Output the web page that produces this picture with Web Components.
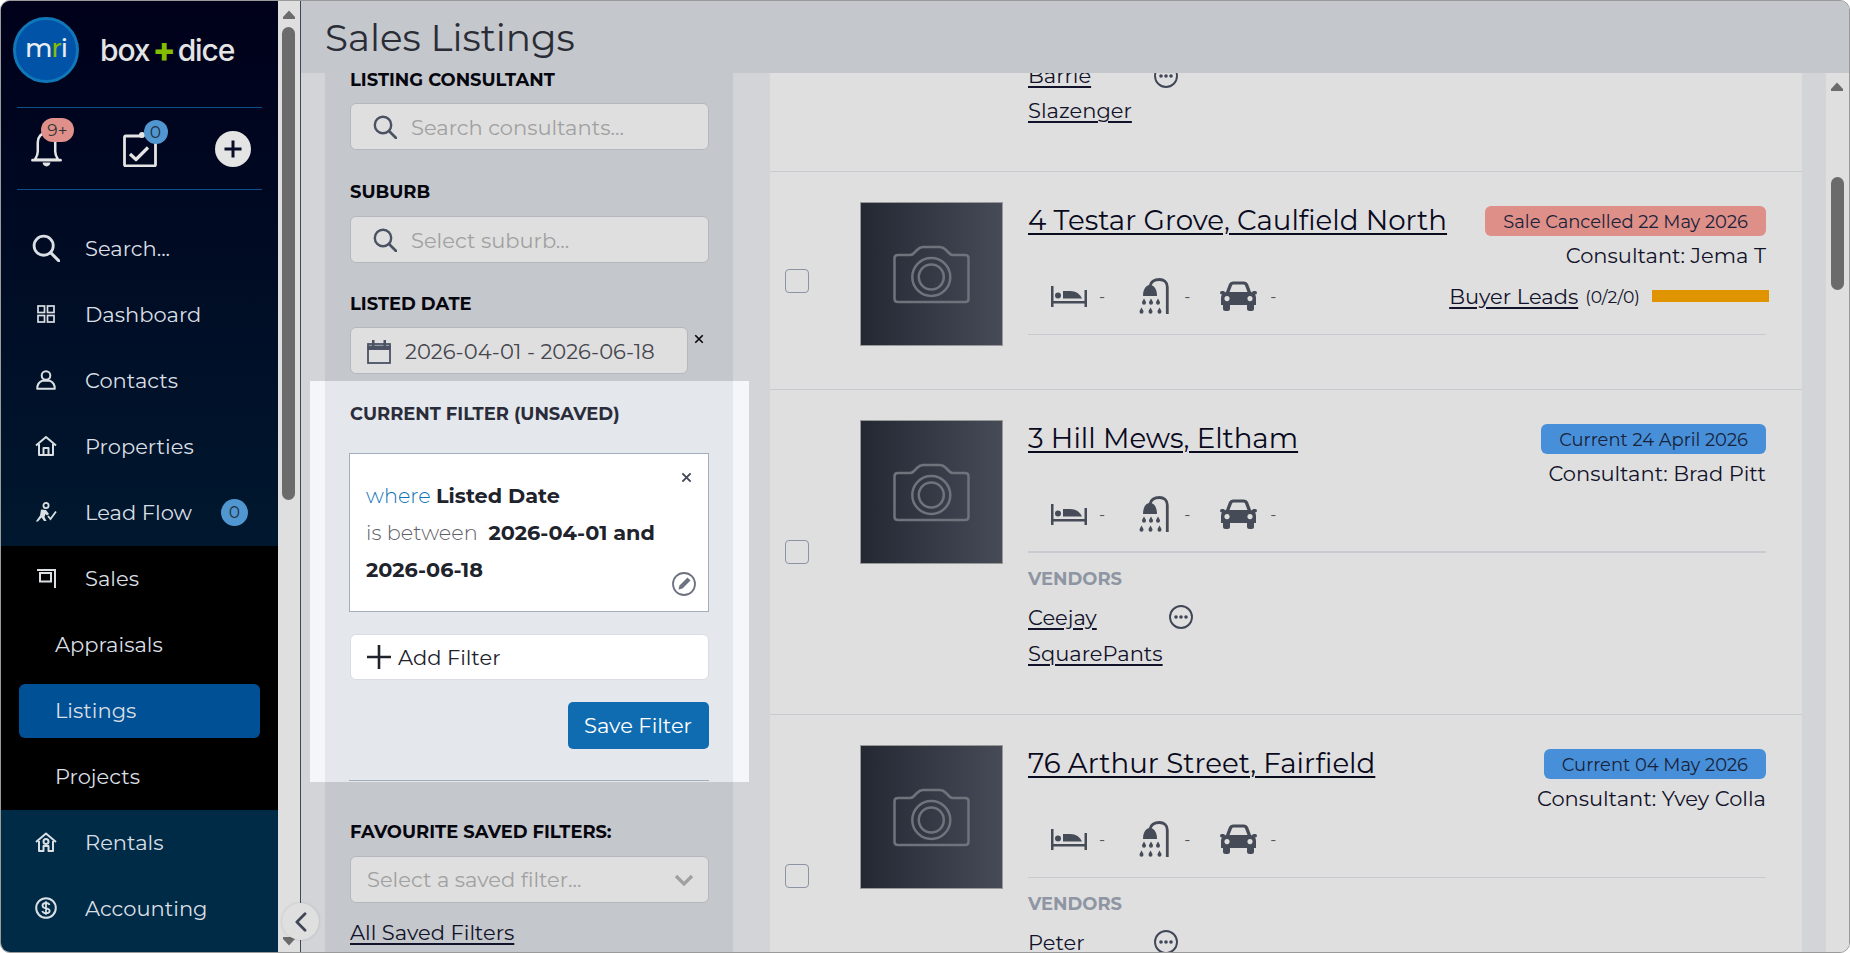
<!DOCTYPE html>
<html lang="en"><head><meta charset="utf-8"><title>Sales Listings</title>
<style>
html,body{margin:0;padding:0;background:#fff}
body{font-family:Montserrat,Inter,"Liberation Sans",sans-serif;width:1850px;height:953px;overflow:hidden;color:#12122a}
</style></head><body>
<app-shell>
  <side-nav slot="nav"></side-nav>
  <page-head slot="head">Sales Listings</page-head>
  <filter-panel slot="filters"></filter-panel>
  <listing-list slot="list">
    <listing-row cut vendors="Barrie|Slazenger" dots="126"></listing-row>
    <listing-row title="4 Testar Grove, Caulfield North" status="Sale Cancelled 22 May 2026" tone="red" consultant="Jema T" leads="(0/2/0)"></listing-row>
    <listing-row thick title="3 Hill Mews, Eltham" status="Current 24 April 2026" tone="blue" consultant="Brad Pitt" vendors="Ceejay|SquarePants" dots="141"></listing-row>
    <listing-row style="min-height:322px" title="76 Arthur Street, Fairfield" status="Current 04 May 2026" tone="blue" consultant="Yvey Colla" vendors="Peter" dots="126"></listing-row>
  </listing-list>
</app-shell>
<script>
const ICONS={
search:['0 0 24 24','<circle cx="10" cy="10" r="8.2" fill="none" stroke="currentColor" stroke-width="2.4"/><path d="M16 16l7 7" stroke="currentColor" stroke-width="2.6" stroke-linecap="round"/>'],
dash:['0 0 18 18','<g fill="none" stroke="currentColor" stroke-width="1.7"><rect x="1" y="1" width="6.5" height="6.5"/><rect x="10.5" y="1" width="6.5" height="6.5"/><rect x="1" y="10.5" width="6.5" height="6.5"/><rect x="10.5" y="10.5" width="6.5" height="6.5"/></g>'],
contact:['0 0 20 20','<g fill="none" stroke="currentColor" stroke-width="2"><circle cx="10" cy="5.5" r="4.3"/><path d="M1.2 18.8c0-4.5 2.5-7 5-8h7.6c2.5 1 5 3.5 5 8z" stroke-linejoin="round"/></g>'],
house:['0 0 22 20','<g fill="none" stroke="currentColor" stroke-width="2" stroke-linejoin="round"><path d="M1 9.5L11 1l10 8.5"/><path d="M4 8v11h14V8"/><path d="M8.5 19v-7h5v7"/></g>'],
lead:['0 0 22 20','<circle cx="11" cy="3.5" r="2.6" fill="none" stroke="currentColor" stroke-width="1.8"/><path d="M6 7.500l5 .5 3 4-2 1.500-1.500-1.500-1 3 2 4H9l-2.500-3.500L3 19.500H.8L5 13.500z" fill="currentColor"/><path d="M13 14l2.500 3L21 9.500" fill="none" stroke="currentColor" stroke-width="1.8"/>'],
sales:['0 0 19 20','<g fill="none" stroke="currentColor" stroke-width="2"><path d="M0 2h18v18"/><rect x="3" y="5" width="11" height="8.5"/></g>'],
rent:['0 0 22 20','<g fill="none" stroke="currentColor" stroke-width="2" stroke-linejoin="round"><path d="M1 10L11 1.500 21 10"/><path d="M4 9v10h4.500v-5h5v5H18V9"/><circle cx="11" cy="9.5" r="2.5"/></g>'],
money:['0 0 22 22','<circle cx="11" cy="11" r="9.8" fill="none" stroke="currentColor" stroke-width="2"/><path d="M14.500 8c-.5-1.500-2-2-3.500-2-2 0-3.500 1-3.500 2.700 0 3.800 7.200 1.500 7.200 5 0 1.600-1.700 2.500-3.700 2.500-1.700 0-3.200-.7-3.700-2.200M11 4.200v13.600" fill="none" stroke="currentColor" stroke-width="1.8"/>'],
bell:['0 0 32 38','<g fill="none" stroke="currentColor" stroke-width="2.6" stroke-linejoin="round"><path d="M16 3c-5.500 0-9 4-9 9.500V22c0 4-1.500 6-3 8.500h24c-1.500-2.500-3-4.500-3-8.500v-9.500C25 7 21.500 3 16 3z"/><path d="M1.500 31h29" stroke-linecap="round"/></g><path d="M12 33.500h8c0 2.500-2 4-4 4s-4-1.500-4-4z" fill="currentColor"/>'],
clip:['0 0 34 36','<g fill="none" stroke="currentColor" stroke-width="2.8" stroke-linejoin="round"><path d="M20 5H3a1.500 1.500 0 0 0-1.500 1.500v27A1.500 1.500 0 0 0 3 35h28a1.500 1.500 0 0 0 1.500-1.500v-22"/><path d="M7 23l6 5.500 12-12" stroke-width="3.2"/></g><circle cx="19" cy="4" r="3" fill="currentColor"/>'],
plusc:['0 0 36 36','<circle cx="18" cy="18" r="18" fill="currentColor"/><path d="M18 9.500v17M9.500 18h17" stroke="#0a0c26" stroke-width="3"/>'],
cal:['0 0 24 25','<g fill="none" stroke="currentColor"><rect x="1" y="5" width="22" height="19" stroke-width="1.8"/><path d="M1 7h22v3.500H1z" fill="currentColor" stroke-width="1"/></g><path d="M5 1h2.500v6H5zM16.500 1H19v6h-2.500z" fill="currentColor"/>'],
cross:['0 0 12 12','<path d="M1.500 1.500l9 9m0-9l-9 9" stroke="currentColor" stroke-width="2"/>'],
edit:['0 0 24 24','<circle cx="12" cy="12" r="11" fill="none" stroke="currentColor" stroke-width="1.8"/><path d="M6.500 17.500l1-4 8-8 3 3-8 8z" fill="currentColor"/>'],
plus:['0 0 24 24','<path d="M12 0v24M0 12h24" stroke="currentColor" stroke-width="2.6"/>'],
chev:['0 0 20 12','<path d="M2 2l8 8 8-8" fill="none" stroke="currentColor" stroke-width="3.2"/>'],
back:['0 0 14 22','<path d="M12 2L3 11l9 9" fill="none" stroke="currentColor" stroke-width="3" stroke-linecap="round" stroke-linejoin="round"/>'],
bed:['0 0 38 23','<g fill="currentColor"><rect x="1" y="1" width="2.5" height="21"/><rect x="34.500" y="5" width="2.5" height="17"/><rect x="1" y="16" width="36" height="2.5"/><circle cx="8" cy="10.5" r="3"/><path d="M13 6h7c6 0 10 3 12 7.500H13z"/></g>'],
shower:['0 0 30 36','<path d="M28.300 36V9C28.300 4 24.500 1.500 20.500 1.500 16 1.500 12 3.500 11 8" fill="none" stroke="currentColor" stroke-width="2.8"/><path d="M4 18C4 11 7 7 11 7s7 4 7 11z" fill="currentColor"/><g fill="currentColor"><path d="M5 20.500c1 2 2 3 2 4.200a2 2 0 0 1-4 0c0-1.200 1-2.200 2-4.200z"/><path d="M12 20.500c1 2 2 3 2 4.200a2 2 0 0 1-4 0c0-1.200 1-2.200 2-4.200z"/><path d="M19 20.500c1 2 2 3 2 4.200a2 2 0 0 1-4 0c0-1.200 1-2.200 2-4.200z"/><path d="M2.500 29.500c1 2 2 3 2 4.200a2 2 0 0 1-4 0c0-1.200 1-2.200 2-4.200z"/><path d="M11.500 29.500c1 2 2 3 2 4.200a2 2 0 0 1-4 0c0-1.200 1-2.200 2-4.200z"/><path d="M20.500 29.500c1 2 2 3 2 4.200a2 2 0 0 1-4 0c0-1.200 1-2.200 2-4.200z"/></g>'],
car:['0 0 37 30','<g fill="currentColor"><path fill-rule="evenodd" d="M6 11L9 3Q10 .5 13 .5H24Q27 .5 28 3L31 11Q36 12 36 17V24H1V17Q1 12 6 11ZM9.500 11H27.500L25 4.500Q24.500 3.500 23.500 3.500H13.500Q12.500 3.500 12 4.500ZM7 15a2.600 2.600 0 1 0 .01 0ZM30 15a2.600 2.600 0 1 0 .01 0Z"/><rect x="3" y="22" width="7" height="8" rx="2.5"/><rect x="27" y="22" width="7" height="8" rx="2.5"/><rect y="10" width="5" height="3.5" rx="1.7"/><rect x="32" y="10" width="5" height="3.5" rx="1.7"/></g>'],
camera:['0 0 78 59','<g fill="none" stroke="currentColor" stroke-width="2.5"><path d="M5 10H17Q19 10 20.500 8.500L24 5Q27 2 30 2H47Q50 2 53 5L56.500 8.500Q58 10 60 10H72Q75.500 10 75.500 13V54Q75.500 57 72 57H5Q1.500 57 1.500 54V13Q1.500 10 5 10Z"/><circle cx="38.3" cy="32" r="19"/><circle cx="38.3" cy="32" r="12.5"/></g>'],
dots:['0 0 24 24','<circle cx="12" cy="12" r="11" fill="none" stroke="currentColor" stroke-width="1.9"/><g fill="currentColor"><circle cx="7" cy="12" r="1.8"/><circle cx="12" cy="12" r="1.8"/><circle cx="17" cy="12" r="1.8"/></g>'],
up:['0 0 12 9','<path d="M6 .5L12 7v2H0V7z" fill="currentColor"/>'],
down:['0 0 12 9','<path d="M6 8.500L12 2V0H0v2z" fill="currentColor"/>']
};
function def(name,html){
  customElements.define(name,class extends HTMLElement{
    constructor(){super();this.attachShadow({mode:'open'});}
    connectedCallback(){
      const a=n=>this.getAttribute(n)||'';
      this.shadowRoot.innerHTML=typeof html==='function'?html(a,this):html;
    }
  });
}
def('x-icon',(a)=>{const i=ICONS[a('name')];const w=a('w')||24,h=a('h')||w;
  return `<style>:host{display:inline-flex;flex:none;line-height:0}svg{display:block}</style><svg width="${w}" height="${h}" viewBox="${i[0]}" aria-hidden="true">${i[1]}</svg>`});

def('app-shell',`<style>
:host{display:flex;position:relative;box-sizing:border-box;width:1850px;height:953px;border:1px solid #9a9a9a;border-radius:10px;overflow:hidden;background:#d3d4d8}
.nav{flex:none;width:277px;display:flex}
.gut{flex:none;width:22px;box-sizing:border-box;background:#dfdfdf;display:flex;flex-direction:column;align-items:center}
.up{margin-top:9px;color:#6b6b6b;margin-left:-1px}
.th{width:13px;height:473px;margin-top:8px;background:#6b6b6b;border-radius:7px;margin-left:-1px}
.dn{margin-top:auto;margin-bottom:6px;color:#6b6b6b;margin-left:-1px}
.rule{flex:none;width:1px;background:#3f4656}
.main{flex:1;min-width:0;display:flex;flex-direction:column}
.body{flex:1;min-height:0;display:flex;background:#d3d4d8;overflow:hidden}
.fl{flex:none;width:408px;margin-left:24px}
.ls{flex:none;width:1032px;margin-left:37px}
.sb{flex:none;width:23px;margin-left:24px;background:#dfdfdf;display:flex;flex-direction:column;align-items:center}
.sb .up{margin-top:9px}
.sb .th{height:113px;margin-top:86px;margin-left:0}
.col{position:absolute;left:281px;top:902px;width:37px;height:37px;border-radius:50%;background:#dfdfdf;display:flex;align-items:center;justify-content:center;box-shadow:0 0 3px rgba(0,0,0,.15);color:#3f4656}
</style>
<div class="nav"><slot name="nav"></slot></div>
<div class="gut"><x-icon class="up" name="up" w="12" h="9"></x-icon><div class="th"></div><x-icon class="dn" name="down" w="12" h="9"></x-icon></div>
<div class="rule"></div>
<div class="main"><slot name="head"></slot><div class="body">
<div class="fl"><slot name="filters"></slot></div>
<div class="ls"><slot name="list"></slot></div>
<div class="sb"><x-icon class="up" name="up" w="12" h="9"></x-icon><div class="th"></div></div>
</div></div>
<div class="col"><x-icon name="back" w="13" h="20"></x-icon></div>`);

def('page-head',`<style>:host{display:flex;align-items:center;flex:none;height:72px;box-sizing:border-box;padding:0 0 0 24px;background:#c4c7cb;font-size:37.3px;color:#2a2c36}</style><slot></slot>`);

def('nav-row',(a)=>`<style>
:host{display:flex;align-items:center;height:66px;box-sizing:border-box;font-size:21px;color:#dadfe4}
.i{width:44px;margin-left:23px;margin-right:17px;display:flex;justify-content:center;flex:none}
:host([sub]){padding-left:54px}
:host([active]){height:54px;margin:6px 18px;padding-left:36px;background:#005095;border-radius:6px}
.b{margin-left:auto;margin-right:30px;width:27px;height:27px;border-radius:50%;background:#5096d0;color:#22303f;font-size:17px;display:flex;align-items:center;justify-content:center}
</style>${a('icon')?`<div class="i"><x-icon name="${a('icon')}" w="${a('w')||22}" h="${a('h')||20}"></x-icon></div>`:''}<slot></slot>${a('badge')?`<span class="b">${a('badge')}</span>`:''}`);

def('side-nav',`<style>
:host{display:flex;flex-direction:column;width:277px;height:100%;background:#002b47;color:#e4e4e4}
.top{background:linear-gradient(#00001a,#00182f);height:545px;flex:none}
.logo{height:106px;box-sizing:border-box;padding:16px 0 0 12px;display:flex;align-items:flex-start;gap:21px}
.mri{width:66px;height:66px;box-sizing:border-box;border-radius:50%;background:#0053a6;border:3px solid #1077b8;display:flex;align-items:center;justify-content:center;color:#e8edf2;font-size:26px;font-weight:500;letter-spacing:-1px;padding-bottom:4px}
.mri b{font-weight:500;color:#84bd00}
.wm{display:flex;align-items:center;height:66px;font-family:Inter,sans-serif;font-size:30px;font-weight:500;color:#e4e4e4;letter-spacing:-1.1px}
.wm i{font-style:normal;font-weight:800;color:#84bd00;font-size:34px;margin:0 3px;line-height:1}
.hr{height:1px;margin:0 16px;background:#0b4f8e}
.act{height:81px;display:grid;grid-template-columns:repeat(3,93px);align-items:center;justify-items:center;margin-left:-1px}
.wrap{position:relative;display:flex}
.bd{position:absolute;display:flex;align-items:center;justify-content:center;color:#333;font-size:17px;height:24px;background:#e0908a;border-radius:12px;width:33px;left:10px;top:-12px}
.bd.n{background:#5096d0;width:24px;left:21px;top:-11px;color:#22303f}
.rows{padding-top:25px}
.sales{background:#000;height:264px;flex:none}
.low{padding-bottom:2px}
</style>
<div class="top">
 <div class="logo"><div class="mri"><span>m<b>r</b>i</span></div><div class="wm">box<i>+</i>dice</div></div>
 <div class="hr"></div>
 <div class="act">
  <div class="wrap"><x-icon name="bell" w="31" h="37"></x-icon><span class="bd">9+</span></div>
  <div class="wrap"><x-icon name="clip" w="34" h="36"></x-icon><span class="bd n">0</span></div>
  <div class="wrap"><x-icon name="plusc" w="36" h="36"></x-icon></div>
 </div>
 <div class="hr"></div>
 <div class="rows">
  <nav-row icon="search" w="28" h="28">Search...</nav-row>
  <nav-row icon="dash" w="18" h="18">Dashboard</nav-row>
  <nav-row icon="contact" w="20" h="20">Contacts</nav-row>
  <nav-row icon="house" w="22" h="20">Properties</nav-row>
  <nav-row icon="lead" w="22" h="20" badge="0">Lead Flow</nav-row>
 </div>
</div>
<div class="sales">
 <nav-row class="low" icon="sales" w="19" h="20">Sales</nav-row>
 <nav-row class="low" sub>Appraisals</nav-row>
 <nav-row class="low" sub active>Listings</nav-row>
 <nav-row class="low" sub>Projects</nav-row>
</div>
<nav-row class="low" icon="rent" w="22" h="20">Rentals</nav-row>
<nav-row class="low" icon="money" w="22" h="22">Accounting</nav-row>`);

def('field-label',`<style>:host{display:flex;align-items:center;height:20px;font-size:17.9px;font-weight:700;color:#06060f;white-space:nowrap}</style><slot></slot>`);
def('field-box',(a)=>`<style>
:host{display:flex;align-items:center;box-sizing:border-box;height:47px;padding-top:1px;background:#dfdfdf;border:1px solid #b4b7bc;border-radius:6px;font-size:21px;color:#a1a1a1;white-space:nowrap}
.s{margin:0 14px 0 22px;color:#4a5264}
.c{margin:0 14px 0 16px;color:#4a5264}
:host([val]){color:#45464e}
.e{margin-left:auto;margin-right:14px;color:#a0a0a0}
:host([pad]){padding:0 0 0 16px}
</style>${a('icon')==='search'?'<x-icon class="s" name="search" w="24" h="24"></x-icon>':''}${a('icon')==='cal'?'<x-icon class="c" name="cal" w="24" h="25"></x-icon>':''}<slot></slot>${a('icon')==='chev'?'<x-icon class="e" name="chev" w="20" h="12"></x-icon>':''}`);

def('current-filter',`<style>
:host{display:block;margin:0 -40.5px 0 -40px;padding:0 16px 0 15px;background:#f4f6fa}
.in{background:#e4e7ec;padding:22px 24.5px 1px 25px}
h3{margin:0;height:20px;display:flex;align-items:center;font-size:17.9px;font-weight:700;color:#2a2c3a}
.box{position:relative;margin:30px 0 0 -1px;height:159px;box-sizing:border-box;background:#fff;border:1px solid #a4adbd;padding:23px 16px 0;font-size:20.8px;line-height:37px;font-weight:300;color:#5f616a}
.w{color:#0f73b8}
b{color:#20222c;font-weight:700}
.x{position:absolute;right:16px;top:18px;color:#3f4656}
.ed{position:absolute;right:12px;bottom:15px;color:#6d7280}
.add{margin-top:22px;height:46px;box-sizing:border-box;background:#fff;border:1px solid #d9dce2;border-radius:6px;display:flex;align-items:center;padding-left:16px;gap:7px;font-size:21px;color:#20222c}
.foot{display:flex;justify-content:flex-end;margin-top:22px}
.save{width:141px;height:47px;border-radius:5px;background:#0f6cb0;color:#fff;display:flex;align-items:center;justify-content:center;font-size:21px}
.ln{margin:31px 0 0 -1px;height:1px;background:#a4adbd}
</style><div class="in"><h3>CURRENT FILTER (UNSAVED)</h3>
<div class="box"><span class="w">where</span> <b>Listed Date</b><br>is between &nbsp;<b>2026&#8209;04&#8209;01 and 2026&#8209;06&#8209;18</b>
<x-icon class="x" name="cross" w="11" h="11"></x-icon><x-icon class="ed" name="edit" w="24" h="24"></x-icon></div>
<div class="add"><x-icon name="plus" w="24" h="24"></x-icon>Add Filter</div>
<div class="foot"><div class="save">Save Filter</div></div>
<div class="ln"></div></div>`);

def('filter-panel',`<style>
:host{display:flow-root;height:100%;box-sizing:border-box;background:#c4c7cb;padding:0 24.5px 0 25px;position:relative}
field-label{margin-top:31px}
field-box{margin-top:14px}
.first{margin-top:-4px}
.s2{margin-top:15px}
.l3{margin-top:30px}
.date{display:flex;align-items:flex-start;margin-top:14px}
.date field-box{margin:0;width:337.5px}
.date x-icon{margin:7px 0 0 6px;color:#06060f}
.fav{margin-top:39px}
.all{display:block;margin-top:12px;height:36px;line-height:36px;font-size:21px;color:#12122a;text-decoration:underline;text-decoration-thickness:1.5px;text-underline-offset:3px}
current-filter{margin-top:7px}
</style>
<field-label class="first">LISTING CONSULTANT</field-label>
<field-box icon="search">Search consultants...</field-box>
<field-label>SUBURB</field-label>
<field-box class="s2" icon="search">Select suburb...</field-box>
<field-label class="l3">LISTED DATE</field-label>
<div class="date"><field-box icon="cal" val>2026-04-01 - 2026-06-18</field-box><x-icon name="cross" w="10" h="10"></x-icon></div>
<current-filter></current-filter>
<field-label class="fav">FAVOURITE SAVED FILTERS:</field-label>
<field-box icon="chev" pad style="margin-top:15px">Select a saved filter...</field-box>
<a class="all">All Saved Filters</a>`);

def('listing-list',`<style>:host{display:block;height:100%;background:#dfdfdf;overflow:hidden}</style><slot></slot>`);

def('status-pill',(a)=>`<style>:host{display:inline-flex;align-items:center;justify-content:center;height:30px;box-sizing:border-box;padding:0 18px;border-radius:6px;font-size:17.9px;color:#18223a;white-space:nowrap;background:${a('tone')==='red'?'#de8f88':'#4790d9'}}</style><slot></slot>`);

def('listing-row',(a)=>{
 const v=a('vendors')?a('vendors').split('|'):[];
 const vend=v.length?`<div class="vl">${v.map((n,i)=>`<div class="vr"><a class="nm" ${i==0?`style="min-width:${a('dots')}px"`:''}>${n}</a>${i==0?'<x-icon class="dt" name="dots" w="24" h="24"></x-icon>':''}</div>`).join('')}</div>`:'';
 const st=`<style>
:host{display:grid;grid-template-columns:24px 194px 1fr;box-sizing:border-box;min-height:218px;border-bottom:1px solid #c8cacf;padding:0 36px 0 15px;overflow:hidden}
:host([cut]){display:flex;flex-direction:column;justify-content:flex-end;min-height:0;height:99px;padding:0 36px 43px 258px}
.cb{align-self:center;width:24px;height:24px;box-sizing:border-box;border:1.5px solid #8c93a3;border-radius:4px;background:#dfdfdf;grid-row:1;grid-column:1}
.ph{grid-column:2;grid-row:1;width:143px;height:144px;box-sizing:border-box;margin:30px 0 0 51px;border:1px solid #999;background:linear-gradient(90deg,#232833,#464b57);display:flex;align-items:center;justify-content:center;color:#6f737c;align-self:start}
.ct{grid-column:3;grid-row:1;margin-left:25px;padding:30px 0 43px;min-width:0}
.hd{display:grid;grid-template-columns:1fr auto;height:132px;border-bottom:1px solid #c8cacf}
:host([thick]) .hd{border-bottom-width:2px;height:131px}
h2{margin:0;font-weight:400;font-size:27.7px;line-height:36px;height:36px;color:#0a0a1e;white-space:nowrap}
a{text-decoration:underline;text-decoration-thickness:1.5px;text-underline-offset:3px}
h2 a{text-decoration-thickness:2px}
.sp{display:flex;align-items:center;height:36px;margin-top:40px;padding-left:22px;color:#464b58;font-size:18px}
.sp span{color:#555;font-size:16px}
.r{display:flex;flex-direction:column;align-items:flex-end;padding-top:4px;white-space:nowrap}
.cs{margin-top:2px;height:36px;line-height:36px;font-size:21px}
.ld{display:flex;align-items:center;height:36px;margin-top:4px;font-size:21px}
.ld small{font-size:17.2px;margin-left:7px}
.bar{width:117px;height:12px;background:#e09400;margin-left:12px;margin-right:-3px}
.vh{margin-top:15px;height:20px;display:flex;align-items:center;font-size:17.9px;font-weight:700;color:#8e95a3}
.vl{margin-top:11px}
.vr{display:flex;align-items:center;height:36px;font-size:21px}
:host([cut]) .vr{height:35px}
.nm{display:inline-block}
.dt{color:#3f4656}
:host([cut]) .vl{margin:0}
</style>`;
 if(a('title')==='' ) return st+vend;
 return st+`<div class="cb"></div><div class="ph"><x-icon name="camera" w="78" h="59"></x-icon></div>
<div class="ct"><div class="hd"><div><h2><a>${a('title')}</a></h2>
<div class="sp"><x-icon name="bed" w="38" h="23"></x-icon><span style="margin:0 34px 0 11px">-</span><x-icon name="shower" w="30" h="36"></x-icon><span style="margin:0 30px 0 15px">-</span><x-icon name="car" w="37" h="30"></x-icon><span style="margin-left:13px">-</span></div></div>
<div class="r"><status-pill tone="${a('tone')}">${a('status')}</status-pill><div class="cs">Consultant: ${a('consultant')}</div>${a('leads')?`<div class="ld"><a>Buyer Leads</a><small>${a('leads')}</small><div class="bar"></div></div>`:''}</div></div>
${v.length?`<div class="vh">VENDORS</div>${vend}`:''}</div>`;
});
</script>
</body></html>
